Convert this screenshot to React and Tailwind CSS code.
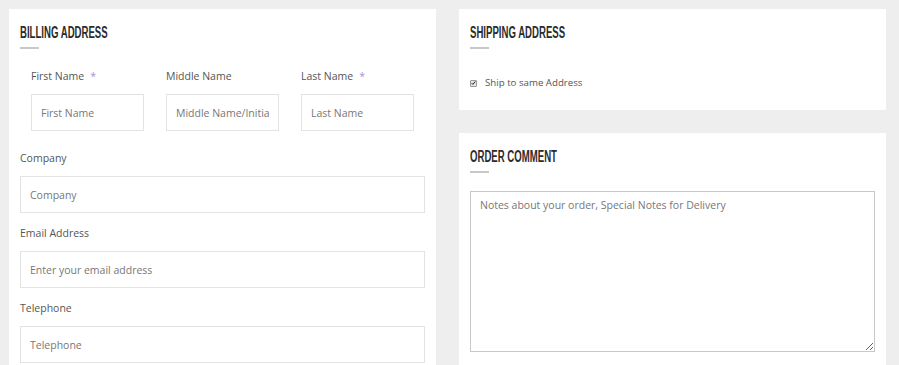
import React from "react";

const headFont = { fontFamily: '"Liberation Sans", Arial, sans-serif' };

function Heading({ children }) {
  return (
    <div>
      <div className="h-[20px] overflow-visible whitespace-nowrap">
        <h2
          className="inline-block origin-left scale-x-[0.6] text-[16px] leading-[20px] font-bold text-[#2b2b2b] uppercase"
          style={headFont}
        >
          {children}
        </h2>
      </div>
      <div className="mt-[7px] h-[2px] w-[19px] bg-[#c8c8c8]" />
    </div>
  );
}

function Field({ label, placeholder, required, className = "" }) {
  return (
    <div className={className}>
      <label className="block text-[10.5px] leading-[18px] text-[#555]">
        {label}
        {required && <span className="ml-[6px] text-[#a392d6]">*</span>}
      </label>
      <input
        placeholder={placeholder}
        className="mt-[9px] block h-[37px] w-full border border-[#e3e3e3] bg-white px-[9px] text-[10.5px] text-[#555] placeholder:text-[#777] outline-none"
      />
    </div>
  );
}

export default function App() {
  return (
    <div
      className="flex h-[365px] w-[899px] items-start gap-[23px] overflow-hidden bg-[#eeeeee] pl-[9px] pt-[9px]"
      style={{ fontFamily: '"Open Sans", "Liberation Sans", sans-serif' }}
    >
      <div className="h-[400px] w-[427px] shrink-0 bg-white p-[11px]">
        <Heading>Billing Address</Heading>
        <div className="mt-[18px] grid grid-cols-3">
          <Field className="px-[11px]" label="First Name" placeholder="First Name" required />
          <Field className="px-[11px]" label="Middle Name" placeholder="Middle Name/Initial" />
          <Field className="px-[11px]" label="Last Name" placeholder="Last Name" required />
        </div>
        <Field className="mt-[18px]" label="Company" placeholder="Company" />
        <Field className="mt-[11px]" label="Email Address" placeholder="Enter your email address" />
        <Field className="mt-[11px]" label="Telephone" placeholder="Telephone" />
      </div>

      <div className="flex w-[427px] shrink-0 flex-col gap-[23px]">
        <div className="h-[101px] bg-white p-[11px]">
          <Heading>Shipping Address</Heading>
          <div className="mt-[27px] flex items-center">
            <span className="flex h-[7px] w-[7px] items-center justify-center rounded-[1px] border border-[#9a9a9a] bg-[#e4e4e4]">
              <svg viewBox="0 0 8 8" className="h-[6px] w-[6px]">
                <path d="M1 4.2 L3 6.2 L7 1.5" fill="none" stroke="#222" strokeWidth="1.6" />
              </svg>
            </span>
            <span className="ml-[8px] text-[9.7px] leading-[14px] text-[#555]">Ship to same Address</span>
          </div>
        </div>
        <div className="h-[300px] bg-white p-[11px]">
          <Heading>Order Comment</Heading>
          <textarea
            placeholder="Notes about your order, Special Notes for Delivery"
            className="mt-[18px] block h-[161px] w-full border border-[#c9c9c9] px-[9px] py-[4px] text-[10.5px] leading-[18px] text-[#555] placeholder:text-[#777] outline-none"
          />
        </div>
      </div>
    </div>
  );
}
